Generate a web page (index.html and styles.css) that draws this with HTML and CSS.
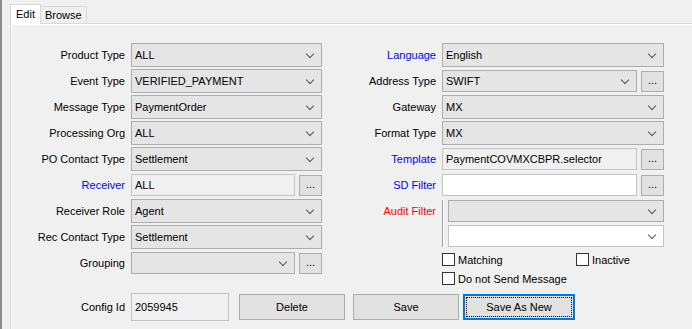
FILE: index.html
```html
<!DOCTYPE html>
<html lang="en">
<head>
  <meta charset="UTF-8">
  <title>Message Config</title>
  <link rel="stylesheet" href="styles.css">
</head>
<body>
  <div class="window">
    <div class="tabs">
      <div class="tab active">Edit</div>
      <div class="tab">Browse</div>
    </div>

    <div class="panel">
      <div class="columns">
        <div class="form form-left">
          <label>Product Type</label>
          <div class="combo"><span>ALL</span></div>

          <label>Event Type</label>
          <div class="combo"><span>VERIFIED_PAYMENT</span></div>

          <label>Message Type</label>
          <div class="combo"><span>PaymentOrder</span></div>

          <label>Processing Org</label>
          <div class="combo"><span>ALL</span></div>

          <label>PO Contact Type</label>
          <div class="combo"><span>Settlement</span></div>

          <label class="link">Receiver</label>
          <div class="pair">
            <div class="field">ALL</div>
            <button class="dots">...</button>
          </div>

          <label>Receiver Role</label>
          <div class="combo"><span>Agent</span></div>

          <label>Rec Contact Type</label>
          <div class="combo"><span>Settlement</span></div>

          <label>Grouping</label>
          <div class="pair">
            <div class="combo small"><span></span></div>
            <button class="dots">...</button>
          </div>
        </div>

        <div class="form form-right">
          <label class="link">Language</label>
          <div class="combo"><span>English</span></div>

          <label>Address Type</label>
          <div class="pair">
            <div class="combo small"><span>SWIFT</span></div>
            <button class="dots">...</button>
          </div>

          <label>Gateway</label>
          <div class="combo"><span>MX</span></div>

          <label>Format Type</label>
          <div class="combo"><span>MX</span></div>

          <label class="link">Template</label>
          <div class="pair">
            <div class="field">PaymentCOVMXCBPR.selector</div>
            <button class="dots">...</button>
          </div>

          <label class="link">SD Filter</label>
          <div class="pair">
            <div class="field white"></div>
            <button class="dots">...</button>
          </div>

          <label class="required top">Audit Filter</label>
          <div class="audit">
            <div class="combo small"><span></span></div>
            <div class="combo small white"><span></span></div>
          </div>

          <div class="checks">
            <div class="check"><span class="box"></span>Matching</div>
            <div class="check"><span class="box"></span>Inactive</div>
            <div class="check"><span class="box"></span>Do not Send Message</div>
          </div>
        </div>
      </div>

      <div class="actions">
        <label>Config Id</label>
        <div class="field id">2059945</div>
        <button class="btn first">Delete</button>
        <button class="btn">Save</button>
        <button class="btn default">Save As New</button>
      </div>
    </div>
  </div>
</body>
</html>
```

FILE: styles.css
```css
* {
  box-sizing: border-box;
}

body {
  margin: 0;
  background-color: #f0f0f0;
  font-family: "Liberation Sans", Arial, sans-serif;
  font-size: 11px;
  color: #000;
}

.window {
  height: 329px;
  border-left: 2px solid #8c8c8c;
  padding: 4px 0 0 8px;
  display: flex;
  flex-direction: column;
}

/* tab strip */
.tabs {
  display: flex;
  align-items: flex-end;
  height: 19px;
  position: relative;
  z-index: 1;
}

.tab {
  height: 17px;
  line-height: 15px;
  padding: 1px 4px 0;
  border: 1px solid #d9d9d9;
  border-bottom: none;
  border-left: none;
  background: #f0f0f0;
}

.tab.active {
  height: 20px;
  margin-bottom: -1px;
  padding: 2px 5px 0;
  border-left: 1px solid #d9d9d9;
  background: #fff;
}

.panel {
  flex: 1;
  border-top: 1px solid #d9d9d9;
  border-left: 1px solid #d9d9d9;
  box-shadow: inset 1px 1px 0 #fff;
  padding-top: 19px;
}

.columns {
  display: flex;
  align-items: flex-start;
}

/* form grids */
.form {
  display: grid;
  column-gap: 6px;
  row-gap: 2px;
  grid-auto-rows: 24px;
  align-items: center;
}

.form-left {
  grid-template-columns: 114px 191px;
}

.form-right {
  margin-left: 8px;
  grid-template-columns: 106px 222px;
  grid-template-rows: repeat(6, 24px) 48px auto;
}

label {
  text-align: right;
  white-space: nowrap;
}

label.link {
  color: #0000ff;
}

label.required {
  color: #ff0000;
}

label.top {
  align-self: start;
  margin-top: 6px;
}

/* controls */
.combo {
  height: 24px;
  border: 1px solid #adadad;
  background: #e5e5e5;
  display: flex;
  align-items: center;
  padding: 0 8px 0 3px;
}

.combo span {
  flex: 1;
  white-space: nowrap;
}

.combo::after {
  content: "";
  width: 5px;
  height: 5px;
  border-right: 1px solid #555;
  border-bottom: 1px solid #555;
  transform: rotate(45deg);
  margin-top: -3px;
}

.combo.small {
  height: 22px;
}

.combo.white {
  background: #fff;
  border-color: #c4c4c4;
}

.pair {
  display: flex;
  align-items: center;
  gap: 4px;
}

.pair > .field,
.pair > .combo {
  flex: 1;
}

.field {
  height: 22px;
  border: 1px solid #c4c4c4;
  background: #f0f0f0;
  padding: 0 3px;
  display: flex;
  align-items: center;
  white-space: nowrap;
}

.field.white {
  background: #fff;
}

.dots {
  width: 23px;
  height: 21px;
  padding: 0 0 3px;
  border: 1px solid #adadad;
  background: #e1e1e1;
  font: inherit;
  color: #000;
}

.audit {
  grid-column: 2;
  align-self: stretch;
  display: flex;
  flex-direction: column;
  gap: 3px;
  margin: 1px 0 0;
  padding-left: 5px;
  border-left: 1px solid #a0a0a0;
  box-shadow: inset 1px 0 0 #fff;
}

/* checkboxes */
.checks {
  grid-column: 2;
  display: grid;
  grid-template-columns: 134px auto;
  grid-auto-rows: 19px;
  align-items: center;
  padding-top: 1px;
}

.check {
  display: flex;
  align-items: center;
  gap: 3px;
  white-space: nowrap;
}

.box {
  width: 13px;
  height: 13px;
  border: 1px solid #333;
  background: #fff;
}

/* bottom row */
.actions {
  display: flex;
  align-items: center;
  margin-top: 5px;
}

.actions label {
  width: 114px;
  margin-right: 6px;
}

.field.id {
  width: 98px;
  height: 28px;
}

.btn {
  width: 106px;
  height: 26px;
  margin-left: 8px;
  border: 1px solid #adadad;
  background: #e1e1e1;
  font: inherit;
  color: #000;
}

.btn.first {
  margin-left: 10px;
}

.btn.default {
  margin-left: 4px;
  width: 112px;
  border: 2px solid #0078d7;
  background: #e1e1e1;
  outline: 1px dotted #000;
  outline-offset: -4px;
}
```
